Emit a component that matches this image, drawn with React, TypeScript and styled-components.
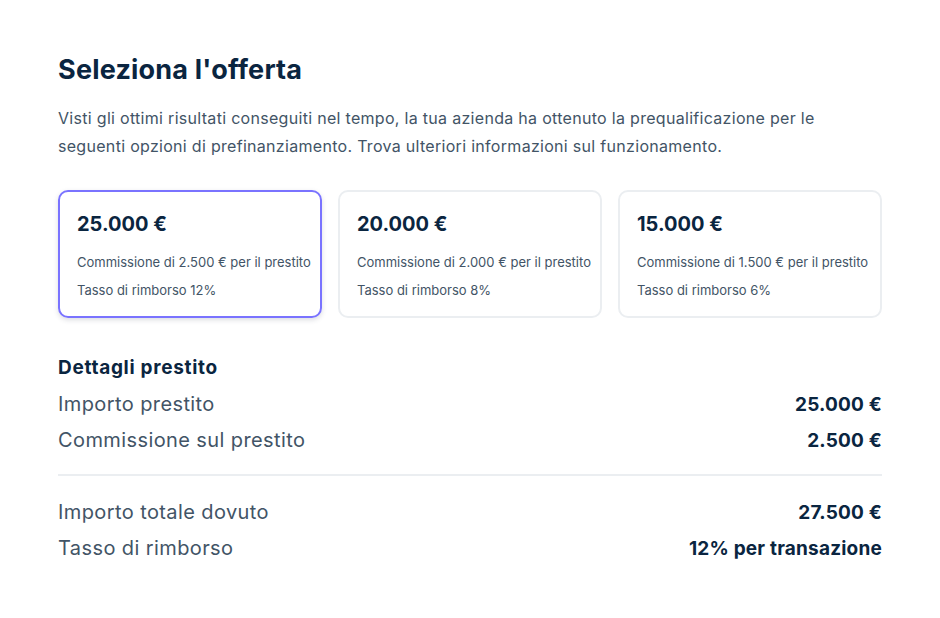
import React from 'react';
import styled, { createGlobalStyle } from 'styled-components';

const GlobalStyle = createGlobalStyle`
    body {
        margin: 0;
        background: #ffffff;
        font-family: Inter, "Noto Sans", sans-serif;
    }
`;

const Page = styled.main`
    padding: 52px 58px 40px 58px;
    width: 824px;
`;

const Title = styled.h1`
    margin: 0;
    font-size: 27px;
    line-height: 36px;
    font-weight: 700;
    color: #0a2540;
    letter-spacing: 0.2px;
`;

const Intro = styled.p`
    margin: 16px 0 0 0;
    font-size: 16px;
    line-height: 28px;
    color: #425466;
    letter-spacing: 0.3px;
`;

const Offers = styled.div`
    display: grid;
    grid-template-columns: repeat(3, minmax(0, 1fr));
    gap: 16px;
    margin-top: 30px;
`;

const OfferCard = styled.button<{ $selected?: boolean }>`
    all: unset;
    box-sizing: border-box;
    min-width: 0;
    height: 128px;
    padding: 18px 4px 20px 17px;
    border-radius: 10px;
    border: ${(p) => (p.$selected ? '2px solid #7a73ff' : '2px solid #ebeef1')};
    box-shadow: ${(p) =>
        p.$selected ? '0 2px 5px rgba(60, 66, 87, 0.18)' : 'none'};
    display: flex;
    flex-direction: column;
    cursor: pointer;
`;

const Amount = styled.div`
    font-size: 20px;
    line-height: 28px;
    font-weight: 700;
    color: #0a2540;
`;

const CardLine = styled.div<{ $first?: boolean }>`
    font-size: 13px;
    line-height: 20px;
    color: #425466;
    margin-top: ${(p) => (p.$first ? '14px' : '8px')};
    white-space: nowrap;
`;

const Details = styled.section`
    margin-top: 36px;
`;

const DetailsTitle = styled.h2`
    margin: 0 0 4px 0;
    font-size: 19px;
    line-height: 28px;
    font-weight: 700;
    color: #0a2540;
    letter-spacing: 0.7px;
`;

const Row = styled.div`
    display: flex;
    justify-content: space-between;
    align-items: center;
    height: 36px;
`;

const Label = styled.span`
    font-size: 20px;
    color: #425466;
    letter-spacing: 0.4px;
`;

const Value = styled.span`
    font-size: 19px;
    font-weight: 700;
    color: #0a2540;
    letter-spacing: 0.2px;
`;

const Divider = styled.hr`
    border: none;
    border-top: 2px solid #ebeef1;
    margin: 16px 0 18px 0;
`;

const offers = [
    { amount: '25.000 €', fee: '2.500 €', rate: '12%' },
    { amount: '20.000 €', fee: '2.000 €', rate: '8%' },
    { amount: '15.000 €', fee: '1.500 €', rate: '6%' },
];

export default function App(): JSX.Element {
    const selected = 0;
    return (
        <>
            <GlobalStyle />
            <Page>
                <Title>Seleziona l'offerta</Title>
                <Intro>
                    Visti gli ottimi risultati conseguiti nel tempo, la tua azienda ha ottenuto la
                    prequalificazione per le seguenti opzioni di prefinanziamento. Trova ulteriori
                    informazioni sul funzionamento.
                </Intro>

                <Offers>
                    {offers.map((o, i) => (
                        <OfferCard key={o.amount} $selected={i === selected}>
                            <Amount>{o.amount}</Amount>
                            <CardLine $first>Commissione di {o.fee} per il prestito</CardLine>
                            <CardLine>Tasso di rimborso {o.rate}</CardLine>
                        </OfferCard>
                    ))}
                </Offers>

                <Details>
                    <DetailsTitle>Dettagli prestito</DetailsTitle>
                    <Row>
                        <Label>Importo prestito</Label>
                        <Value>25.000 €</Value>
                    </Row>
                    <Row>
                        <Label>Commissione sul prestito</Label>
                        <Value>2.500 €</Value>
                    </Row>
                    <Divider />
                    <Row>
                        <Label>Importo totale dovuto</Label>
                        <Value>27.500 €</Value>
                    </Row>
                    <Row>
                        <Label>Tasso di rimborso</Label>
                        <Value>12% per transazione</Value>
                    </Row>
                </Details>
            </Page>
        </>
    );
}
